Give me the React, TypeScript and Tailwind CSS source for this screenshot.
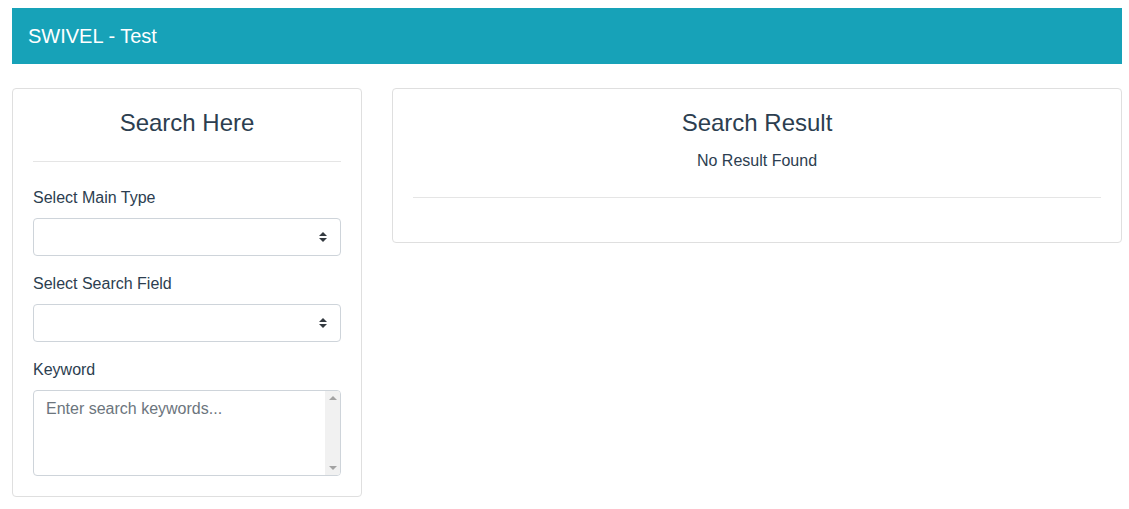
const SelectCaret = () => (
  <svg
    className="pointer-events-none absolute right-[14px] top-1/2 -translate-y-1/2"
    width="8"
    height="10"
    viewBox="0 0 8 10"
  >
    <path d="M4 0L8 4H0z M4 10L0 6H8z" fill="#343a40" />
  </svg>
);

function SelectField({ label }: { label: string }) {
  return (
    <div className="mb-[16px]">
      <label className="mb-[8px] block text-[16px] leading-[24px]">{label}</label>
      <div className="relative">
        <select className="block h-[38px] w-full appearance-none rounded-[4px] border border-[#ced4da] bg-white px-[12px] text-[16px] outline-none">
          <option></option>
        </select>
        <SelectCaret />
      </div>
    </div>
  );
}

export default function App() {
  return (
    <div
      className="min-h-screen bg-white pl-[12px] pr-[7px] pt-[8px] text-[#2c3e50]"
      style={{ fontFamily: '"Liberation Sans", Arial, sans-serif' }}
    >
      {/* Navbar */}
      <div className="flex h-[56px] items-center bg-[#17a2b8] px-[16px]">
        <span className="text-[20px] text-white">SWIVEL - Test</span>
      </div>

      <div className="mt-[24px] flex items-start gap-[30px]">
        {/* Search form */}
        <div className="w-[350px] shrink-0 rounded-[4px] border border-[#dfdfdf] p-[20px]">
          <h3 className="text-center text-[24px] leading-[28px]">Search Here</h3>
          <hr className="mt-[24px] border-t border-[#e5e5e5]" />
          <div className="mt-[24px]">
            <SelectField label="Select Main Type" />
            <SelectField label="Select Search Field" />
            <div>
              <label className="mb-[8px] block text-[16px] leading-[24px]">Keyword</label>
              <div className="relative">
                <textarea
                  rows={3}
                  placeholder="Enter search keywords..."
                  className="block h-[86px] w-full resize-none overflow-hidden rounded-[4px] border border-[#ced4da] py-[6px] pl-[12px] pr-[28px] text-[16px] leading-[24px] outline-none placeholder:text-[#6c757d]"
                />
                {/* scrollbar track */}
                <div className="pointer-events-none absolute top-[1px] right-[1px] bottom-[1px] flex w-[15px] flex-col items-center justify-between rounded-r-[3px] bg-[#f1f1f1] py-[5px]">
                  <svg width="8" height="4" viewBox="0 0 8 4">
                    <path d="M4 0L8 4H0z" fill="#a3a3a3" />
                  </svg>
                  <svg width="8" height="4" viewBox="0 0 8 4">
                    <path d="M0 0H8L4 4z" fill="#a3a3a3" />
                  </svg>
                </div>
              </div>
            </div>
          </div>
        </div>

        {/* Results */}
        <div className="flex-1 rounded-[4px] border border-[#dfdfdf] p-[20px]">
          <h3 className="text-center text-[24px] leading-[28px]">Search Result</h3>
          <p className="mt-[12px] text-center text-[16px] leading-[24px]">No Result Found</p>
          <hr className="mt-[24px] mb-[24px] border-t border-[#e5e5e5]" />
        </div>
      </div>
    </div>
  );
}
